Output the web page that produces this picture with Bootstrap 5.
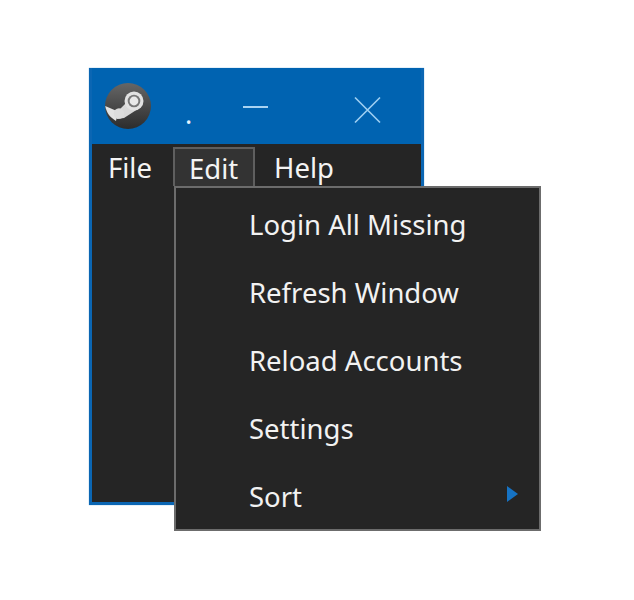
<!DOCTYPE html>
<html lang="en">
<head>
<meta charset="utf-8">
<title>Edit menu</title>
<link rel="stylesheet" href="https://cdn.jsdelivr.net/npm/bootstrap@5.3.0/dist/css/bootstrap.min.css">
<style>
html,body{height:100%;background:#fff;margin:0;overflow:hidden}
body{font-family:"Noto Sans","Open Sans",sans-serif;color:#f2f2f2}
.app-window{position:absolute;left:89px;top:68px;width:335px;height:437px;background:#0063b1;border:solid #0b66b3;border-width:0 3px 3px 3px;box-shadow:0 0 1px #5ea4dc}
.title-strip{height:76px;padding-left:12px}
.steam-mark{width:48px;height:48px;flex:none;margin-top:-1px;filter:blur(.5px)}
.dot-title{font-size:27px;line-height:1;margin-left:33px;margin-top:15px;color:#e6f3ff;width:8px}
.min-glyph{width:25px;height:2px;background:#a9d3f2;margin-left:50px;margin-top:1px}
.close-glyph{width:28px;height:28px;margin-left:85px;margin-top:7px}
.menu-strip{height:100%;background:#252525;padding:3px 0 0 0}
.top-item{font-size:27.5px;line-height:39px;height:39px;padding:0 16px;margin:0;color:#f4f4f4;border:2px solid transparent;display:flex;align-items:center}
.top-file{padding:2px 0 0 14px;width:81px}
.top-edit{background:#333;border-color:#5f5f5f;border-bottom:0;width:82px;padding:2px 0 0 14px}
.top-help{padding:2px 0 0 17px}
.popup{position:absolute;left:174px;top:186px;width:367px;height:345px;background:#252525;border:2px solid #6c6c6c;padding:3px 0 0 0;margin:0;list-style:none;z-index:5}
.popup-row{font-size:27.5px;line-height:68px;height:68px;padding-left:73px;color:#f2f2f2;display:flex;align-items:center;justify-content:space-between;padding-right:21px}
.sub-arrow{width:11px;height:16px;flex:none;margin-top:-6px;filter:blur(.4px)}
</style>
</head>
<body>
<div class="app-window d-flex flex-column">
  <div class="title-strip d-flex align-items-center flex-shrink-0">
    <svg class="steam-mark" viewBox="0 0 48 48" aria-hidden="true">
      <defs><linearGradient id="g" x1="0" y1="0" x2="0" y2="1"><stop offset="0" stop-color="#666"/><stop offset="1" stop-color="#2c2c2c"/></linearGradient></defs>
      <circle cx="24" cy="24" r="23" fill="url(#g)"/>
      <path d="M1.2 24 L14 29.5 L12 39 C6 35.5 2.4 30.5 1.2 24Z" fill="#e2e2e2"/>
      <path d="M10 33 L22 21 L30 12 L37 25 L20 36 L13 37Z" fill="#d8d8d8"/>
      <circle cx="15" cy="31.5" r="5.2" fill="#dcdcdc"/>
      <circle cx="30" cy="19" r="9.5" fill="#e2e2e2"/>
      <circle cx="30" cy="19" r="6.3" fill="#777"/>
      <circle cx="30" cy="19" r="4.4" fill="#e8e8e8"/>
    </svg>
    <div class="dot-title">.</div>
    <div class="min-glyph"></div>
    <svg class="close-glyph" viewBox="0 0 28 28" aria-hidden="true"><path d="M2 1.500 L27 26.500 M27 1.500 L2 26.500" stroke="#9fd0f2" stroke-width="1.6" fill="none"/></svg>
  </div>
  <div class="menu-strip d-flex align-items-start">
    <div class="top-item top-file">File</div>
    <div class="top-item top-edit">Edit</div>
    <div class="top-item top-help">Help</div>
  </div>
</div>
<ul class="popup">
  <li class="popup-row">Login All Missing</li>
  <li class="popup-row">Refresh Window</li>
  <li class="popup-row">Reload Accounts</li>
  <li class="popup-row">Settings</li>
  <li class="popup-row">Sort
    <svg class="sub-arrow" viewBox="0 0 11 16" aria-hidden="true"><path d="M0 0 L11 8 L0 16Z" fill="#1673c4"/></svg>
  </li>
</ul>
<script src="https://cdn.jsdelivr.net/npm/bootstrap@5.3.0/dist/js/bootstrap.bundle.min.js"></script>
</body>
</html>
